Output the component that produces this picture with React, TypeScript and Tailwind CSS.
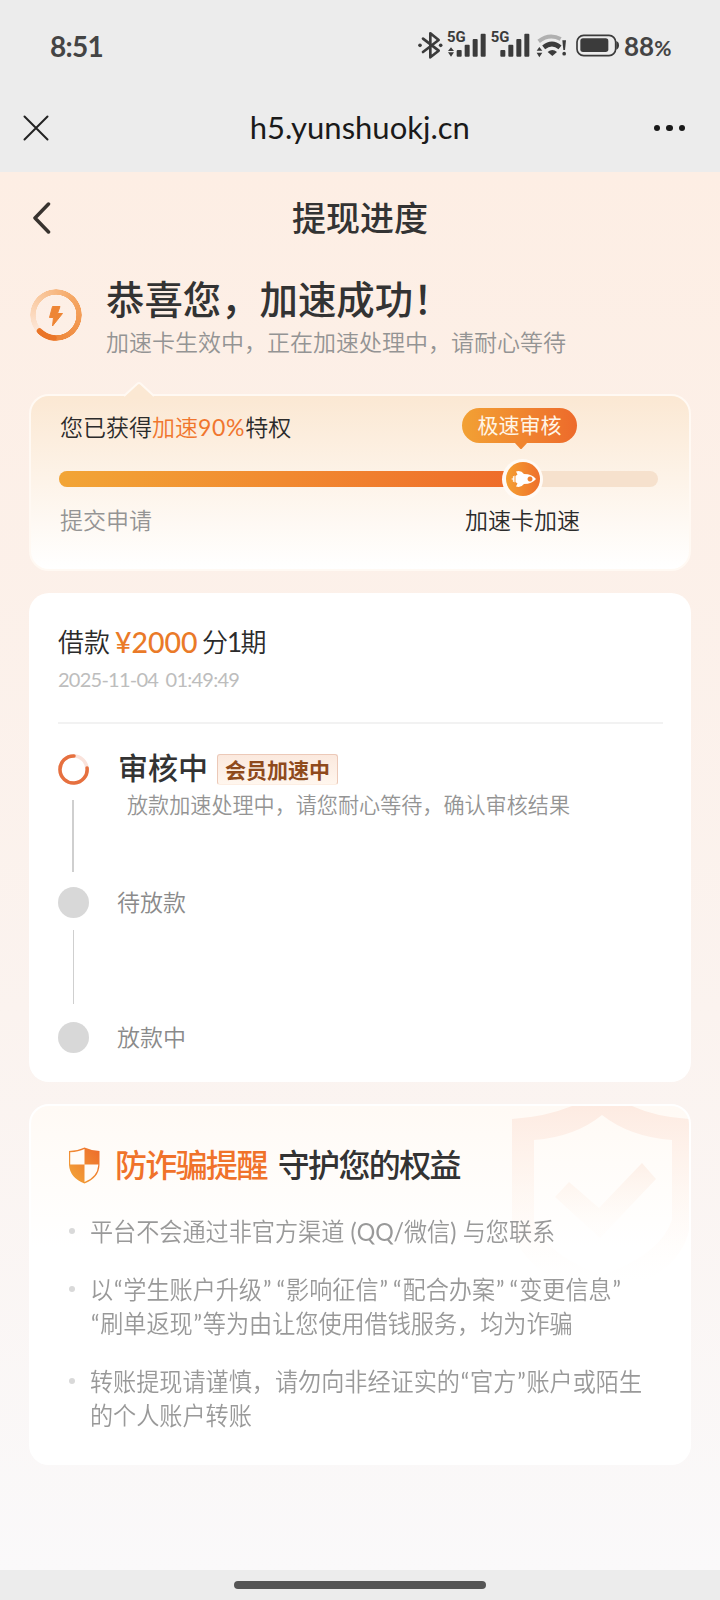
import React from "react";

type StepProps = {
  label: string;
  className: string;
};

const Step = ({ label, className }: StepProps) => {
  return (
    <div className={`flex h-[32px] items-center ${className}`}>
      <div className="h-[31px] w-[31px] rounded-full bg-[#d8d8d8]"></div>
      <span className="ml-[28px] text-[23px] font-[350] leading-[32px] text-[#8a8a8a]">{label}</span>
    </div>
  );
};

const StatusIcons = () => {
  return (
    <svg className="ml-[316px] h-[32px] w-[206px]" viewBox="50 55 618 96" fill="#3b3b3b">
      <path
        d="M68 87 L115 123 L90 143 V71 L115 91 L68 127"
        fill="none"
        stroke="#3b3b3b"
        strokeWidth="8"
        strokeLinejoin="round"
        strokeLinecap="round"
      />
      <circle cx="59" cy="107" r="5.5" />
      <circle cx="121" cy="107" r="5.5" />
      <text x="140" y="96" fontSize="42" fontWeight="700" fontFamily="Roboto, sans-serif" textLength="56" lengthAdjust="spacingAndGlyphs">5G</text>
      <path d="M143 124 L152 113 L161 124Z M143 128 L152 141 L161 128Z" />
      <rect x="169" y="121" width="15" height="20" rx="3" />
      <rect x="193" y="105" width="15" height="36" rx="3" />
      <rect x="217" y="88" width="15" height="53" rx="3" />
      <rect x="241" y="72" width="15" height="69" rx="3" />
      <text x="271" y="96" fontSize="42" fontWeight="700" fontFamily="Roboto, sans-serif" textLength="56" lengthAdjust="spacingAndGlyphs">5G</text>
      <rect x="300" y="121" width="15" height="20" rx="3" />
      <rect x="324" y="105" width="15" height="36" rx="3" />
      <rect x="348" y="88" width="15" height="53" rx="3" />
      <rect x="372" y="72" width="15" height="69" rx="3" />
      <path d="M409 123 L417 112 L426 123Z M409 129 L417 143 L426 129Z" />
      <path d="M415 95 Q447 70 481 88" fill="none" stroke="#b0b0b0" strokeWidth="12" />
      <path d="M430 113 Q455 93 479 113" fill="none" stroke="#3b3b3b" strokeWidth="14" />
      <path d="M442 127 Q456 115 470 127 L456 139Z" />
      <path d="M486 92 h11 l-3 29 h-5z" />
      <circle cx="491.500" cy="132" r="5.500" />
      <rect x="530" y="77" width="116" height="61" rx="20" fill="none" stroke="#3b3b3b" strokeWidth="5" />
      <rect x="540" y="86" width="84" height="41" rx="8" />
      <path d="M648 94 q8 3 8 13 q0 10 -8 13z" />
    </svg>
  );
};

const BrowserHeader = () => {
  return (
    <header className="h-[172px] bg-[#ececec] pt-[28px]">
      <div className="flex h-[36px] items-start pl-[50px]">
        <span className="w-[51px] whitespace-nowrap text-[28px] font-bold leading-[36px] tracking-[-0.700px] text-[#444]">8:51</span>
        <StatusIcons />
        <span className="ml-px flex items-baseline font-bold leading-[36px] text-[#444]">
          <span className="text-[26px]">88</span>
          <span className="text-[21px]">%</span>
        </span>
      </div>
      <div className="mt-[43px] flex h-[40px] items-center justify-between pl-[23px] pr-[35px]">
        <svg className="mt-[2px] h-[26px] w-[26px]" viewBox="0 0 26 26">
          <path d="M1.500 1.500 L24.500 24.500 M24.500 1.500 L1.500 24.500" stroke="#222" strokeWidth="2" strokeLinecap="round" />
        </svg>
        <h1 className="ml-[17px] text-[31px] leading-[40px] text-[#1a1a1a]">h5.yunshuokj.cn</h1>
        <div className="mt-[2px] flex gap-[6px]">
          <i className="h-[6.5px] w-[6.5px] rounded-full bg-[#191919]"></i>
          <i className="h-[6.5px] w-[6.5px] rounded-full bg-[#191919]"></i>
          <i className="h-[6.5px] w-[6.5px] rounded-full bg-[#191919]"></i>
        </div>
      </div>
    </header>
  );
};

const SuccessBanner = () => {
  return (
    <section className="mt-[22px] flex h-[91px]">
      <div className="relative ml-[30px] mt-[15px] h-[52px] w-[52px]">
        <div className="h-full w-full rounded-full bg-[conic-gradient(from_225deg,#fde9dc,#f9c9a0_25%,#f5a764_50%,#ec7c2c)] [mask:radial-gradient(closest-side,transparent_77%,#000_79%,#000_98%,transparent)]"></div>
        <svg className="absolute left-0 top-0 h-[52px] w-[52px]" viewBox="0 0 52 52">
          <path d="M9.500 42 Q15.500 48 24 49" fill="none" stroke="#ea7528" strokeWidth="5.500" strokeLinecap="round" />
          <path d="M22.500 17.500 h7.500 l-2.500 7 h5 l-10 12.500 1-8.500 h-4z" fill="#ee8534" stroke="#ee8534" strokeLinejoin="round" />
        </svg>
      </div>
      <div className="ml-[24px] flex flex-col">
        <h2 className="h-[50px] text-[38.4px] font-medium leading-[50px] text-[#333]">恭喜您，加速成功！</h2>
        <p className="mt-[3px] text-[23px] font-[350] leading-[30px] text-[#949494]">加速卡生效中，正在加速处理中，请耐心等待</p>
      </div>
    </section>
  );
};

const ProgressCard = () => {
  return (
    <section className="relative mx-[29px] mt-[29px] h-[177px] rounded-[20px] border-2 border-[#fff9f3] bg-linear-to-b from-[#fbe8d3] to-white pl-[29px] pt-[14px]">
      <svg className="absolute left-[92px] top-[-15px] h-[18px] w-[32px]" viewBox="0 0 32 18">
        <path d="M1 15 L14 3 Q16 1 18 3 L31 15 V18 H1Z" fill="#fbe8d3" />
        <path d="M1 15 L14 3 Q16 1 18 3 L31 15" fill="none" stroke="#fff9f3" strokeWidth="2" />
      </svg>
      <p className="text-[23px] font-[350] leading-[34px] text-[#2b2b2b]">
        您已获得<span className="text-[#f0762e]">加速<span className="font-normal tracking-[0.700px]">90%</span></span>特权
      </p>
      <div className="relative -ml-px mt-[27px] h-[16px] w-[599px] rounded-full bg-[#f6e1cd]">
        <div className="h-full w-[465px] rounded-full bg-linear-to-r from-[#f2a536] to-[#ee6a2a]"></div>
        <div className="absolute left-[443px] top-[-12.500px] h-[41px] w-[41px] rounded-full bg-[#fffaf5] p-[3.500px]">
          <div className="h-[34px] w-[34px] rounded-full bg-linear-to-r from-[#f4a032] to-[#ee6f2c]">
            <svg viewBox="0 0 34 34" fill="#fff">
              <path fillRule="evenodd" d="M10 9.500 q5-1.500 8 2.500 q8 0 12 5 q-4 5-12 5 q-3 4-8 2.500 l1.500-3 -2-1.500 v-6 l2-1.500z M24 14.500 a2.500 2.500 0 1 0 .01 0z" />
              <path d="M8.500 13.500 l-2 1.500 1 1 -2.500 1 2.500 1 -1 1 2 1.500z" />
            </svg>
          </div>
        </div>
        <div className="absolute left-[403px] top-[-63px] h-[35px] w-[115px] rounded-full bg-linear-to-r from-[#f2a134] to-[#ed6a2b] text-center text-[21px] leading-[33px] text-[#fff5e6]">
          极速审核
          <svg className="absolute left-[52px] top-[34px] h-[8px] w-[14px]" viewBox="0 0 14 8">
            <path d="M0 0 H14 L8 6.500 Q7 7.500 6 6.500Z" fill="#f0852f" />
          </svg>
        </div>
      </div>
      <div className="mt-[18px] flex w-[520px] justify-between text-[23px] font-[350] leading-[30px] text-[#2b2b2b]">
        <span className="text-[#949494]">提交申请</span>
        <span>加速卡加速</span>
      </div>
    </section>
  );
};

const LoanCard = () => {
  return (
    <section className="mx-[29px] mt-[22px] h-[489px] rounded-[20px] bg-white px-[29px] pt-[30px]">
      <div className="flex h-[38px] items-center whitespace-nowrap text-[26px] font-[350] leading-[38px] text-[#2b2b2b]">
        <span className="w-[57px]">借款</span>
        <span className="w-[87px] text-[28.500px] font-medium text-[#ea7a28]">¥2000</span>
        <span className="tracking-[-1px]">分<span className="font-normal tracking-[-1.500px]">1</span>期</span>
      </div>
      <p className="mt-[4px] text-[20px] leading-[28px] tracking-[-0.750px] text-[#bdbdbd] [word-spacing:3px]">2025-11-04 01:49:49</p>
      <hr className="mt-[29px] w-[605px] border-t-2 border-[#f2f2f2]" />

      <div className="mt-[25px] flex h-[76px]">
        <svg className="mt-[5px] h-[31px] w-[31px]" viewBox="0 0 31 31" fill="none" strokeWidth="3.500">
          <circle cx="15.500" cy="15.500" r="13.600" stroke="#fae3dc" />
          <path d="M16 1.900 A13.600 13.600 0 1 0 29.100 14" stroke="#e6703f" strokeLinecap="round" />
        </svg>
        <div className="ml-[29px]">
          <div className="flex h-[38px]">
            <h3 className="text-[30px] font-medium leading-[36px] text-[#333]">审核中</h3>
            <span className="ml-[9px] mt-[5px] h-[31px] w-[121px] rounded-[3px] border border-[#ecc9b8] border-b-[#fdeee3] bg-linear-to-b from-[#fbe9de] to-[#fff6ee] text-center text-[21px] font-bold leading-[29px] text-[#8f4a1c]">
              会员加速中
            </span>
          </div>
          <p className="ml-[9px] mt-[2px] text-[21.100px] font-[350] leading-[32px] text-[#949494]">放款加速处理中，请您耐心等待，确认审核结果</p>
        </div>
      </div>
      <div className="-mt-[25px] ml-[14px] h-[72px] w-[2px] bg-[#cfcfcf]"></div>
      <Step label="待放款" className="mt-[14px]" />
      <div className="ml-[15px] mt-[12px] h-[74px] w-px bg-[#cfcfcf]"></div>
      <Step label="放款中" className="mt-[17px]" />
    </section>
  );
};

const tips = [
  ["平台不会通过非官方渠道 (QQ/微信) 与您联系"],
  ["以“学生账户升级”“影响征信”“配合办案”“变更信息”", "“刷单返现”等为由让您使用借钱服务，均为诈骗"],
  ["转账提现请谨慎，请勿向非经证实的“官方”账户或陌生", "的个人账户转账"],
];

// quotes and latin parts keep the normal weight, quotes also get some extra room
const TipLine = ({ text }: { text: string }) => {
  return (
    <p>
      {text.split(/(”“|[“”]|[()/Q]+)/).map((part, i) => {
        if (i % 2 === 0) return part;
        if (part === "”“") {
          return (
            <span key={i} className="ml-[1px] mr-[0.500px] font-normal tracking-[0.800px]">
              ”<span className="ml-[4.500px]">“</span>
            </span>
          );
        }
        if (part === "“" || part === "”") {
          return <span key={i} className="ml-[1px] font-normal tracking-[0.800px]">{part}</span>;
        }
        return <span key={i} className="font-normal">{part}</span>;
      })}
    </p>
  );
};

const SafetyCard = () => {
  return (
    <section className="relative mx-[29px] mt-[22px] h-[361px] overflow-hidden rounded-[20px] border-2 border-white bg-linear-to-b from-[#fffaf5] to-white to-40% px-[37px] pt-[36px]">
      <svg className="absolute right-0 top-0 h-[190px] w-[177px]" viewBox="512 1106 177 190">
        <defs>
          <linearGradient id="fade" x1="0" y1="1106" x2="0" y2="1280" gradientUnits="userSpaceOnUse">
            <stop offset="0" stopColor="#fdebe2" />
            <stop offset="1" stopColor="#fff8f2" stopOpacity="0" />
          </linearGradient>
          <linearGradient id="fadeCheck" x1="0" y1="1163" x2="0" y2="1225" gradientUnits="userSpaceOnUse">
            <stop offset="0" stopColor="#fdf0e8" />
            <stop offset="1" stopColor="#fff8f2" stopOpacity="0.2" />
          </linearGradient>
        </defs>
        <path
          fillRule="evenodd"
          fill="url(#fade)"
          d="M512 1119 Q545 1117 572 1106 H632 Q656 1117 689 1119 V1230 Q680 1275 602 1300 Q524 1275 512 1230Z M534 1140 Q575 1137 602 1115 Q630 1137 672 1140 V1220 Q660 1255 602 1275 Q545 1255 534 1220Z"
        />
        <path fill="url(#fadeCheck)" d="M569 1182 L555 1197 L600 1238 L656 1179 L642 1163 L599 1208Z" />
      </svg>
      <div className="relative flex h-[46px] items-center">
        <svg className="h-[37px] w-[32px] shrink-0" viewBox="0 0 32 37">
          <defs>
            <linearGradient id="shield" x1="1" y1="0" x2="0" y2="1">
              <stop offset="0" stopColor="#ed6a2a" />
              <stop offset="1" stopColor="#f3a83a" />
            </linearGradient>
          </defs>
          <path d="M16.500 0.500 Q23 3.500 31.500 4 V18 Q31 31 16.500 36.500 Q2 31 1 18 V4 Q10 3.500 16.500 0.500Z" fill="url(#shield)" />
          <path d="M16.500 2 V17.500 H2.200 V5.200 Q10.500 5 16.500 2Z M16.500 17.500 H30.300 V18 Q29.500 30 16.500 35Z" fill="#fffcf8" />
        </svg>
        <h3 className="ml-[15px] whitespace-nowrap text-[32px] font-medium leading-[46px] tracking-[-1.650px] text-[#333]">
          <span className="mr-[11px] text-[#f0722a]">防诈骗提醒</span>
          守护您的权益
        </h3>
      </div>
      <ul className="relative mt-[27px] flex flex-col gap-[24px]">
        {tips.map((lines) => (
          <li key={lines[0]} className="flex pl-px">
            <i className="mt-[13px] h-[6px] w-[6px] shrink-0 rounded-full bg-[#d9d9d9]"></i>
            <div className="ml-[15px] origin-left scale-x-[0.940] whitespace-nowrap text-[24.600px] font-[350] leading-[34px] text-[#999]">
              {lines.map((line) => (
                <TipLine key={line} text={line} />
              ))}
            </div>
          </li>
        ))}
      </ul>
    </section>
  );
};

export default function App() {
  return (
    <div className="flex h-[1600px] w-[720px] flex-col overflow-hidden bg-[#ececec] font-[Lato,'Noto_Sans_CJK_SC',sans-serif]">
      <BrowserHeader />
      <main className="h-[1398px] bg-linear-to-b from-[#fdeee4] via-[#fbf3ef] via-60% to-[#faf9fa]">
        <div className="flex h-[80px] items-center pl-[32px] pt-[11px]">
          <svg className="h-[32px] w-[19px]" viewBox="0 0 19 32">
            <path d="M16.500 2 L3 16 L16.500 30" fill="none" stroke="#38332f" strokeWidth="3.500" strokeLinecap="round" strokeLinejoin="round" />
          </svg>
          <h2 className="w-[618px] text-center text-[34px] font-medium leading-[48px] text-[#333]">提现进度</h2>
        </div>
        <SuccessBanner />
        <ProgressCard />
        <LoanCard />
        <SafetyCard />
      </main>
      <footer className="flex h-[30px] justify-center pt-[11px]">
        <div className="h-[8px] w-[252px] rounded-full bg-[#555]"></div>
      </footer>
    </div>
  );
}
